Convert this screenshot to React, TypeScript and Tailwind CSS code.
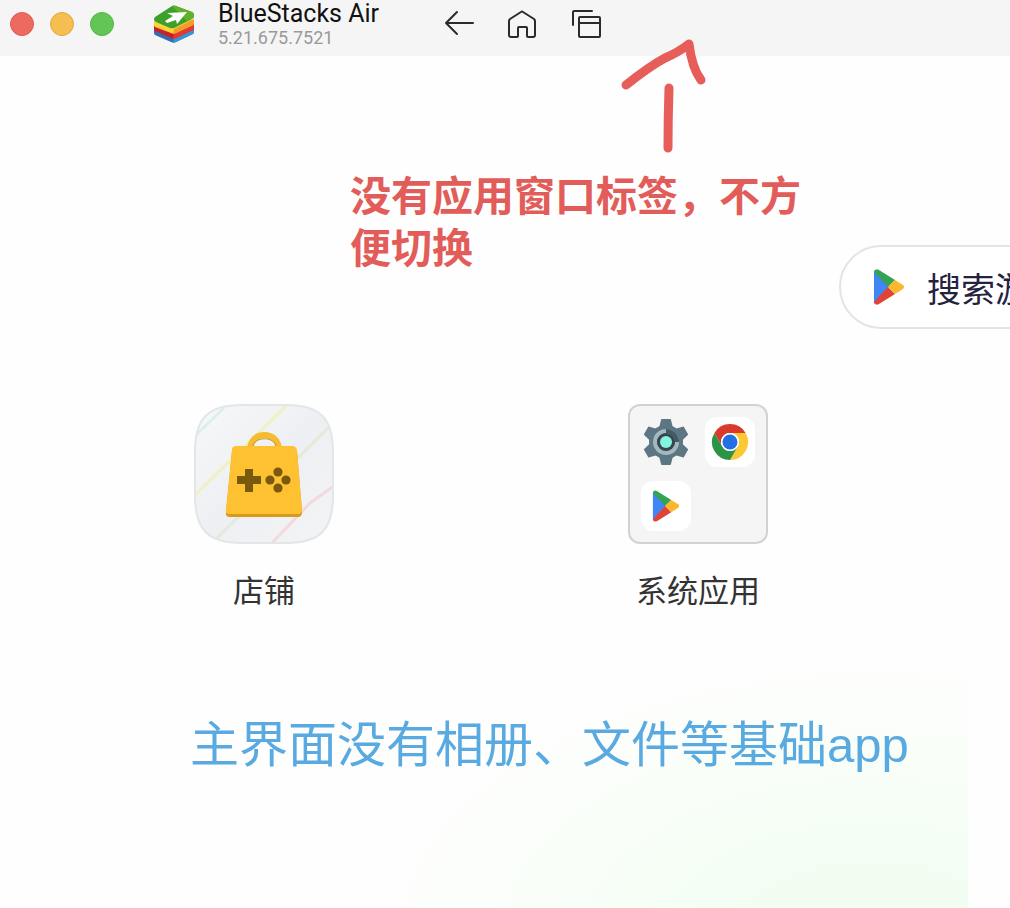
import type { ReactNode } from "react";

function BlueStacksLogo() {
  return (
    <svg viewBox="0 0 40 38" className="h-[38px] w-10 shrink-0" aria-hidden="true">
      <path d="M0 23 H40 V27 Q40 28 39 29 L22 37 Q20 38 17 37 L1 30 Q0 29 0 28Z" fill="#2f6fb5" />
      <path d="M20 33 L40 23 V27 Q40 28 39 29 L22 37 Q20 38 19 38Z" fill="#3b93d6" />
      <path d="M0 19 H40 V23 Q40 24 39 25 L22 33 Q19 34 17 33 L1 26 Q0 25 0 24Z" fill="#c9202b" />
      <path d="M20 29 L40 19 V23 Q40 24 39 25 L22 33 Q20 34 19 34Z" fill="#e23a2e" />
      <path d="M0 15 H40 V18 Q40 19 39 20 L22 28 Q19 29 17 28 L1 22 Q0 21 0 20Z" fill="#fbd33a" />
      <path d="M20 24 L40 14 V18 Q40 19 39 20 L22 28 Q20 29 19 29Z" fill="#f59d2a" />
      <path d="M1 12 L18 1 Q20 0 22 1 L38 7 Q40 8 40 10 V11 Q40 13 38 14 L22 22 Q19 24 16 23 L2 17 Q0 16 0 14 Q0 13 1 12Z" fill="#3f9f2b" />
      <path d="M18 1 Q20 0 22 1 L38 7 Q40 8 40 10 V11 Q40 13 38 14 L33 16Z" fill="#62b02c" />
      <path d="M13 8 L33 7 L23 19 L22 15 L13 18 L11 16 L19 11Z" fill="#fff" />
    </svg>
  );
}

function PlayLogo({ className }: { className: string }) {
  return (
    <svg viewBox="0 0 32 36" className={className} aria-hidden="true">
      <path d="M1 3 Q1 1 3 1 L16 18 L3 35 Q1 35 1 33Z" fill="#4285f4" />
      <path d="M1 3 Q2 -1 6 1 L22 11 L15 18Z" fill="#34a353" />
      <path d="M1 33 Q2 37 6 35 L22 25 L15 18Z" fill="#e14336" />
      <path d="M22 11 L30 16 Q32 18 30 20 L22 25 L15 18Z" fill="#fbb82d" />
    </svg>
  );
}

function ChromeLogo() {
  const sector = "M25 16 H40.6 A18 18 0 0 0 9.4 16 L17.2 29.5 A9 9 0 0 1 25 16Z";
  return (
    <svg viewBox="0 0 50 50" className="size-[50px]" aria-hidden="true">
      <path d={sector} fill="#d93a2b" />
      <path d={sector} fill="#fcc934" transform="rotate(120 25 25)" />
      <path d={sector} fill="#2d9447" transform="rotate(240 25 25)" />
      <circle cx="25" cy="25" r="9" fill="#fff" />
      <circle cx="25" cy="25" r="7.5" fill="#2370e4" />
    </svg>
  );
}

function GearLogo() {
  const teeth = [0, 60, 120, 180, 240, 300];
  return (
    <svg viewBox="0 0 50 50" className="size-[50px]" aria-hidden="true">
      <circle cx="25" cy="25" r="17" fill="#5c7783" />
      {teeth.map((angle) => (
        <path
          key={angle}
          d="M18 11 L20 3 Q20 2 21 2 H29 Q30 2 30 3 L32 11Z"
          fill="#5c7783"
          transform={`rotate(${angle} 25 25)`}
        />
      ))}
      <circle cx="25" cy="25" r="11" fill="none" stroke="#a5b8c0" strokeWidth="4" />
      <path d="M25 14 A11 11 0 0 1 36 25" fill="none" stroke="#425a66" strokeWidth="4" />
      <circle cx="25" cy="25" r="9" fill="#37474f" />
      <circle cx="25" cy="25" r="6" fill="#84f4df" />
    </svg>
  );
}

function StoreIcon() {
  const shape =
    "M48 1 H92 C126 1 139 14 139 48 V92 C139 126 126 139 92 139 H48 C14 139 1 126 1 92 V48 C1 14 14 1 48 1Z";
  return (
    <svg viewBox="0 0 140 140" className="size-[140px]" aria-hidden="true">
      <defs>
        <linearGradient id="tile" x1="0" y1="0" x2="1" y2="1">
          <stop offset="0" stopColor="#f7f8f9" />
          <stop offset="0.5" stopColor="#eeeff2" />
          <stop offset="1" stopColor="#f3f4f6" />
        </linearGradient>
        <clipPath id="tile-shape">
          <path d={shape} />
        </clipPath>
      </defs>
      <path d={shape} fill="url(#tile)" />
      <g clipPath="url(#tile-shape)" fill="none" strokeWidth="3">
        <path d="M0 33 L30 4" stroke="#dcefed" />
        <path d="M0 92 L92 2" stroke="#f3efc4" />
        <path d="M17 140 L140 18" stroke="#e2ebdb" />
        <path d="M77 140 L116 99 L140 82" stroke="#f3d9dd" />
      </g>
      <path d={shape} fill="none" stroke="#e2e6e7" strokeWidth="2" />
      <path d="M56 46 C56 26 85 26 85 46" fill="none" stroke="#f7bb2e" strokeWidth="6" />
      <path d="M59 43 C60 32 81 32 82 43" fill="none" stroke="#c4942c" strokeWidth="1" />
      <path d="M42 43 H98 Q102 43 103 47 L108 108 Q108 113 104 113 H36 Q31 113 32 108 L38 47 Q38 43 42 43Z" fill="#d99a1c" />
      <path d="M42 42 H98 Q102 42 103 46 L108 106 Q108 110 104 110 H36 Q31 110 32 106 L38 46 Q38 42 42 42Z" fill="#fec132" />
      <path d="M51 65 H59 V72 H67 V80 H59 V88 H51 V80 H43 V72 H51Z" fill="#79590c" />
      <g fill="#79590c">
        <circle cx="84" cy="68" r="4.6" />
        <circle cx="76" cy="76" r="4.6" />
        <circle cx="92" cy="76" r="4.6" />
        <circle cx="84" cy="84" r="4.6" />
      </g>
    </svg>
  );
}

function NavButton({ label, children }: { label: string; children: ReactNode }) {
  return (
    <button type="button" aria-label={label} className="size-8">
      <svg
        viewBox="0 0 32 32"
        className="size-8"
        fill="none"
        stroke="#2b2b2b"
        strokeWidth="2"
        strokeLinecap="round"
        strokeLinejoin="round"
      >
        {children}
      </svg>
    </button>
  );
}

function AppTile({ label, children }: { label: string; children: ReactNode }) {
  return (
    <button type="button" className="flex w-[434px] flex-col items-center gap-7">
      {children}
      <span className="text-[31px] leading-10 text-[#333333]">{label}</span>
    </button>
  );
}

export default function App() {
  return (
    <div
      lang="zh-CN"
      className="relative flex min-h-screen flex-col overflow-hidden bg-[#fefefe] font-['Liberation_Sans','Noto_Sans_CJK_SC',sans-serif]"
    >
      <header className="flex h-14 items-center bg-[#f5f5f5] pb-2 pl-[10px]">
        <div className="flex gap-4">
          <button type="button" aria-label="Close" className="size-6 rounded-full border border-[#d95d53] bg-[#ec6a5f]" />
          <button type="button" aria-label="Minimize" className="size-6 rounded-full border border-[#dfa940] bg-[#f4be50]" />
          <button type="button" aria-label="Zoom" className="size-6 rounded-full border border-[#54b348] bg-[#62c655]" />
        </div>
        <div className="ml-10 flex w-[289px] items-center gap-6">
          <BlueStacksLogo />
          <div className="font-['Roboto',sans-serif] whitespace-nowrap">
            <h1 className="text-[25px] leading-7 text-[#111111]">BlueStacks Air</h1>
            <p className="text-lg leading-5 text-[#999999]">5.21.675.7521</p>
          </div>
        </div>
        <nav className="flex gap-8">
          <NavButton label="Back">
            <path d="M30 15 H3 M14 4 L3 15 L14 26" />
          </NavButton>
          <NavButton label="Home">
            <path d="M2 13 Q2 12 3 11 L14 4 Q15 3 16 4 L27 11 Q28 12 28 13 V27 Q28 29 26 29 H21 Q20 29 20 28 V20 Q20 19 19 19 H12 Q11 19 11 20 V28 Q11 29 10 29 H4 Q2 29 2 27Z" />
          </NavButton>
          <NavButton label="Recent apps">
            <path d="M2 17 V4 Q2 3 3 3 H21" />
            <rect x="8" y="9" width="21" height="20" rx="1" />
            <path d="M8 15 H29" />
          </NavButton>
        </nav>
      </header>

      <main className="flex flex-1 flex-col">
        <div className="flex items-start pt-[115px] pl-[350px]">
          <p className="w-[460px] shrink-0 text-[41px] leading-[52px] font-bold text-[#e25d59]">
            没有应用窗口标签，不方便切换
          </p>
          <label className="mt-[74px] ml-[29px] flex h-[84px] w-[480px] shrink-0 items-center gap-[22px] rounded-full border-2 border-[#e4e4e4] bg-white pl-8">
            <PlayLogo className="h-9 w-8 shrink-0" />
            <input
              type="text"
              aria-label="搜索游戏"
              placeholder="搜索游戏"
              className="w-80 bg-transparent pt-1.5 text-[34px] leading-[50px] text-[#25223f] outline-none placeholder:text-[#25223f]"
            />
          </label>
        </div>

        <div className="mt-[75px] flex pl-[47px]">
          <AppTile label="店铺">
            <StoreIcon />
          </AppTile>
          <AppTile label="系统应用">
            <span className="grid size-[140px] grid-cols-[50px_50px] content-center justify-center gap-3.5 rounded-xl border-2 border-[#d2d2d2] bg-[#f5f5f5]">
              <GearLogo />
              <span className="size-[50px] rounded-xl bg-white">
                <ChromeLogo />
              </span>
              <span className="flex size-[50px] items-center justify-center rounded-xl bg-white">
                <PlayLogo className="h-8 w-7" />
              </span>
            </span>
          </AppTile>
        </div>

        <section className="mr-[42px] flex-1 bg-[radial-gradient(ellipse_520px_290px_at_90%_110%,#effdef_0%,#f5fef5_40%,#fbfefa_75%,#fefefe_100%)] pt-[101px] pl-[190px]">
          <p className="text-[49px] leading-[64px] whitespace-nowrap text-[#5aaae2]">
            主界面没有相册、文件等基础app
          </p>
        </section>
      </main>

      {/* hand-drawn arrow, crosses the title bar edge */}
      <svg
        viewBox="0 0 110 130"
        className="pointer-events-none absolute top-[30px] left-[610px] h-[130px] w-[110px]"
        fill="none"
        stroke="#e65d59"
        strokeWidth="9"
        strokeLinecap="round"
        strokeLinejoin="round"
        aria-hidden="true"
      >
        <path d="M16 55 Q40 36 55 28 Q69 22 79 14 Q82 38 91 50" />
        <path d="M59 58 Q58 88 58 118" />
      </svg>
    </div>
  );
}
